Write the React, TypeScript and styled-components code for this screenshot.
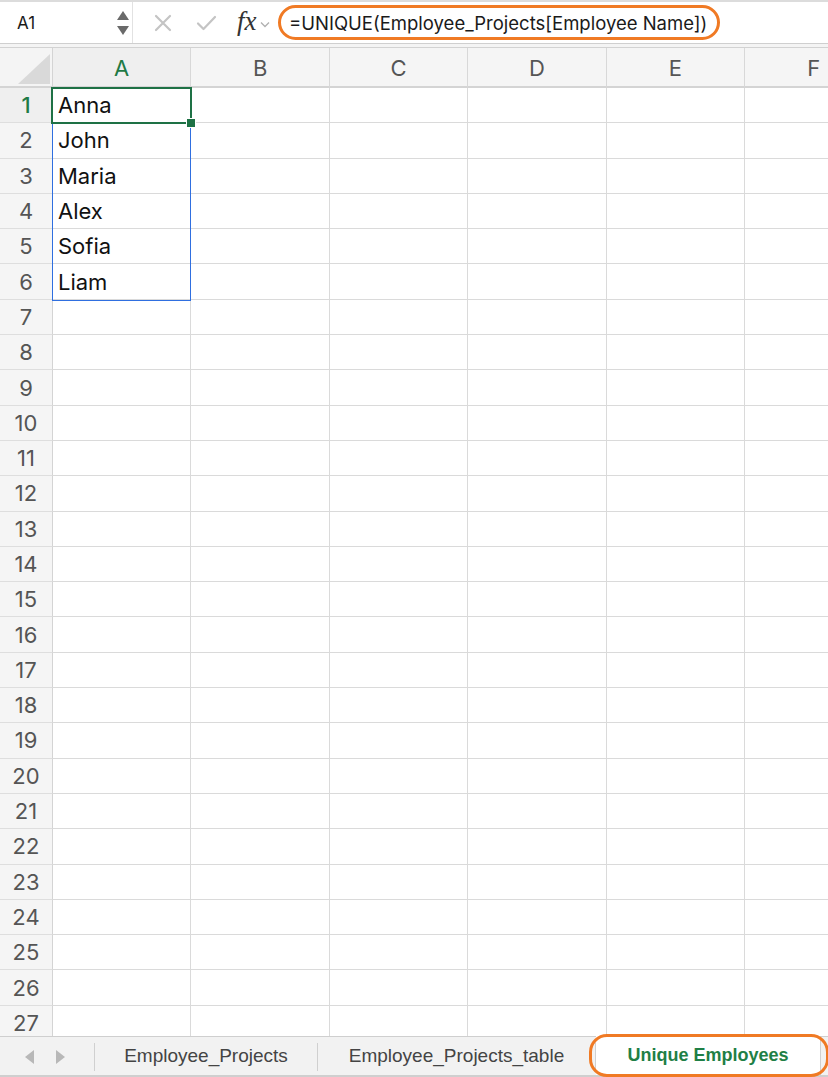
import React from "react";
import styled, { createGlobalStyle } from "styled-components";

const GlobalStyle = createGlobalStyle`
  html, body {
    margin: 0;
    padding: 0;
    background: #ffffff;
  }
  body {
    font-family: "Inter", "Liberation Sans", sans-serif;
  }
`;

const COL_W = 138.4;
const ROW_H = 35.3;
const HEAD_H = 40;
const ROWHEAD_W = 53;
const ROWS = 27;
const COLS = ["A", "B", "C", "D", "E", "F"];
const DATA = ["Anna", "John", "Maria", "Alex", "Sofia", "Liam"];

const Page = styled.div`
  width: 828px;
  height: 1077px;
  display: flex;
  flex-direction: column;
  overflow: hidden;
  background: #ffffff;
`;

const FormulaBar = styled.div`
  height: 41px;
  display: flex;
  align-items: center;
  border-top: 2px solid #dcdcdc;
  border-bottom: 1px solid #cfcfcf;
  background: #ffffff;
`;

const BarGap = styled.div`
  height: 3px;
  background: #f4f4f4;
  border-bottom: 1px solid #d2d2d2;
`;

const NameBox = styled.div`
  width: 130px;
  height: 100%;
  margin-left: 3px;
  display: flex;
  align-items: center;
  justify-content: space-between;
  border-right: 1px solid #e2e2e2;
  box-sizing: border-box;
  padding: 0 3px 0 14px;
  font-size: 17px;
  color: #1a1a1a;
`;

const Spinner = styled.div`
  display: flex;
  flex-direction: column;
  gap: 6px;
`;

const Actions = styled.div`
  display: flex;
  align-items: center;
  width: 146px;
  padding-left: 21px;
  gap: 24px;
  box-sizing: border-box;
`;

const Fx = styled.span`
  font-family: "Liberation Serif", serif;
  font-style: italic;
  font-size: 27px;
  color: #333;
  display: flex;
  align-items: center;
  gap: 3px;
  margin-left: -4px;
  margin-top: -3px;
`;

const FormulaText = styled.span`
  display: inline-flex;
  align-items: center;
  height: 29px;
  border: 3px solid #f07a24;
  border-radius: 18px;
  padding: 0 10px 0 8px;
  margin-left: -1px;
  font-size: 18.5px;
  color: #1a1a1a;
  white-space: nowrap;
`;

const SheetArea = styled.div`
  position: relative;
  flex: 1;
  overflow: hidden;
`;

const Grid = styled.div`
  display: grid;
  grid-template-columns: ${ROWHEAD_W}px repeat(6, ${COL_W}px);
  grid-template-rows: ${HEAD_H}px repeat(${ROWS}, ${ROW_H}px);
`;

const Corner = styled.div`
  background: #f4f4f4;
  border-right: 1px solid #d4d4d4;
  border-bottom: 2px solid #d4d4d4;
  box-sizing: border-box;
  display: flex;
  align-items: flex-end;
  justify-content: flex-end;
  padding: 0 2px 2px 0;
`;

const ColHead = styled.div<{ $active?: boolean }>`
  background: ${(p) => (p.$active ? "#efefef" : "#f5f5f5")};
  border-right: 1px solid #d8d8d8;
  border-bottom: 2px solid #d4d4d4;
  box-sizing: border-box;
  display: flex;
  align-items: center;
  justify-content: center;
  font-size: 22px;
  color: ${(p) => (p.$active ? "#1f7a45" : "#555555")};
  padding-top: 2px;
`;

const RowHead = styled.div<{ $active?: boolean }>`
  background: ${(p) => (p.$active ? "#efefef" : "#f5f5f5")};
  border-right: 1px solid #d4d4d4;
  border-bottom: 1px solid #dedede;
  box-sizing: border-box;
  display: flex;
  align-items: center;
  justify-content: center;
  font-size: 22px;
  color: ${(p) => (p.$active ? "#1f7a45" : "#555555")};
  font-weight: ${(p) => (p.$active ? 500 : 400)};
`;

const Cell = styled.div`
  border-right: 1px solid #dadada;
  border-bottom: 1px solid #dadada;
  box-sizing: border-box;
  display: flex;
  align-items: center;
  padding-left: 5px;
  font-size: 22px;
  color: #111111;
  white-space: nowrap;
`;

const RangeOutline = styled.div`
  position: absolute;
  left: ${ROWHEAD_W - 1}px;
  top: ${HEAD_H + ROW_H}px;
  width: ${COL_W + 1}px;
  height: ${ROW_H * 5 + 1}px;
  border: 1.6px solid #2f6fe0;
  box-sizing: border-box;
  pointer-events: none;
`;

const ActiveCell = styled.div`
  position: absolute;
  left: ${ROWHEAD_W - 2}px;
  top: ${HEAD_H - 1.5}px;
  width: ${COL_W + 2.5}px;
  height: ${ROW_H + 2}px;
  border: 2.5px solid #1e7145;
  box-sizing: border-box;
  pointer-events: none;
`;

const FillHandle = styled.div`
  position: absolute;
  left: ${ROWHEAD_W + COL_W - 5}px;
  top: ${HEAD_H + ROW_H - 5}px;
  width: 8px;
  height: 8px;
  background: #1e7145;
  border: 1px solid #ffffff;
`;

const TabBar = styled.div`
  height: 41px;
  display: flex;
  align-items: stretch;
  background: #f2f2f2;
  border-top: 1px solid #cfcfcf;
  border-bottom: 2px solid #cfcfcf;
  box-sizing: border-box;
`;

const NavArrows = styled.div`
  width: 95px;
  display: flex;
  align-items: center;
  justify-content: center;
  gap: 22px;
  padding-right: 4px;
  box-sizing: border-box;
  border-right: 1px solid #d0d0d0;
  margin: 6px 0 4px;
`;

const Tab = styled.div<{ $active?: boolean; $w: number }>`
  position: relative;
  width: ${(p) => p.$w}px;
  display: flex;
  align-items: center;
  justify-content: center;
  font-family: "Liberation Sans", Arial, sans-serif;
  font-size: ${(p) => (p.$active ? 18 : 19)}px;
  font-weight: ${(p) => (p.$active ? 700 : 400)};
  color: ${(p) => (p.$active ? "#1f7f46" : "#444444")};
  background: ${(p) => (p.$active ? "#ffffff" : "transparent")};
  border-right: 1px solid ${(p) => (p.$active ? "#d0d0d0" : "transparent")};
  margin-top: ${(p) => (p.$active ? "-1px" : "0")};
  &::before {
    content: "";
    display: ${(p) => (p.$active ? "none" : "block")};
    position: absolute;
    right: -1px;
    top: 6px;
    bottom: 4px;
    width: 1px;
    background: #d0d0d0;
  }
  &::after {
    content: "";
    display: ${(p) => (p.$active ? "block" : "none")};
    position: absolute;
    left: -7px;
    right: -9px;
    top: -2px;
    bottom: -2px;
    border: 3px solid #f07a24;
    border-radius: 18px;
  }
`;

const Triangle = ({ dir }: { dir: "up" | "down" | "left" | "right" }) => {
  const pts = {
    up: "0,9 6,0 12,9",
    down: "0,0 12,0 6,9",
    left: "9,0 9,14 0,7",
    right: "0,0 9,7 0,14",
  }[dir];
  const vertical = dir === "up" || dir === "down";
  const fill = vertical ? "#6a6a6a" : "#b8b8b8";
  return (
    <svg width={vertical ? 12 : 9} height={vertical ? 9 : 14} viewBox={vertical ? "0 0 12 9" : "0 0 9 14"}>
      <polygon points={pts} fill={fill} />
    </svg>
  );
};

const CrossIcon = () => (
  <svg width="18" height="18" viewBox="0 0 18 18">
    <path d="M2 2 L16 16 M16 2 L2 16" stroke="#c4c4c4" strokeWidth="2.2" strokeLinecap="round" />
  </svg>
);

const CheckIcon = () => (
  <svg width="21" height="16" viewBox="0 0 21 16">
    <path d="M2 8.5 L7.5 14 L19 2" stroke="#c4c4c4" strokeWidth="2.2" fill="none" strokeLinecap="round" strokeLinejoin="round" />
  </svg>
);

const Chevron = () => (
  <svg width="10" height="7" viewBox="0 0 10 7" style={{ marginTop: 6 }}>
    <path d="M1 1.5 L5 5.5 L9 1.5" stroke="#b0b0b0" strokeWidth="1.3" fill="none" />
  </svg>
);

const CornerTriangle = () => (
  <svg width="32" height="30" viewBox="0 0 32 30">
    <polygon points="32,0 32,30 0,30" fill="#d9d9d9" />
  </svg>
);

export default function App() {
  const cells: React.ReactNode[] = [];
  cells.push(
    <Corner key="corner">
      <CornerTriangle />
    </Corner>
  );
  COLS.forEach((c, i) => {
    cells.push(
      <ColHead key={`h${c}`} $active={i === 0}>
        {c}
      </ColHead>
    );
  });
  for (let r = 1; r <= ROWS; r++) {
    cells.push(
      <RowHead key={`r${r}`} $active={r === 1}>
        {r}
      </RowHead>
    );
    COLS.forEach((c, i) => {
      cells.push(<Cell key={`${c}${r}`}>{i === 0 ? DATA[r - 1] ?? "" : ""}</Cell>);
    });
  }

  return (
    <>
      <GlobalStyle />
      <Page>
        <FormulaBar>
          <NameBox>
            <span>A1</span>
            <Spinner>
              <Triangle dir="up" />
              <Triangle dir="down" />
            </Spinner>
          </NameBox>
          <Actions>
            <CrossIcon />
            <CheckIcon />
            <Fx>
              fx
              <Chevron />
            </Fx>
          </Actions>
          <FormulaText>=UNIQUE(Employee_Projects[Employee Name])</FormulaText>
        </FormulaBar>
        <BarGap />
        <SheetArea>
          <Grid>{cells}</Grid>
          <RangeOutline />
          <ActiveCell />
          <FillHandle />
        </SheetArea>
        <TabBar>
          <NavArrows>
            <Triangle dir="left" />
            <Triangle dir="right" />
          </NavArrows>
          <Tab $w={222}>Employee_Projects</Tab>
          <Tab $w={277}>Employee_Projects_table</Tab>
          <Tab $w={224} $active>
            Unique Employees
          </Tab>
        </TabBar>
      </Page>
    </>
  );
}
